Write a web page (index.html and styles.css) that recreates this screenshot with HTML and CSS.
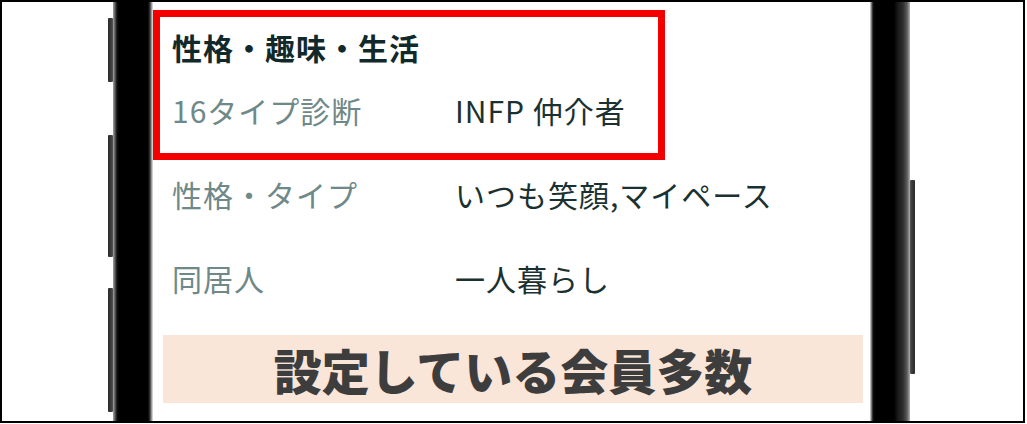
FILE: index.html
```html
<!DOCTYPE html>
<html lang="ja">
<head>
<meta charset="utf-8">
<link rel="stylesheet" href="styles.css">
</head>
<body>
<div class="frame">
  <div class="phone">
    <div class="buttons-left">
      <span class="btn b1"></span>
      <span class="btn b2"></span>
      <span class="btn b3"></span>
    </div>
    <div class="bezel-left"></div>
    <div class="screen">
      <h2 class="heading">性格・趣味・生活</h2>
      <div class="rows">
        <div class="label">16タイプ診断</div>
        <div class="value">INFP 仲介者</div>
        <div class="label">性格・タイプ</div>
        <div class="value">いつも笑顔,マイペース</div>
        <div class="label">同居人</div>
        <div class="value">一人暮らし</div>
      </div>
      <div class="banner">設定している会員多数</div>
      <div class="highlight"></div>
    </div>
    <div class="bezel-right"></div>
    <div class="buttons-right">
      <span class="btn b4"></span>
    </div>
  </div>
</div>
</body>
</html>
```

FILE: styles.css
```css
html, body {
  margin: 0;
  padding: 0;
  background: #ffffff;
}

body {
  font-family: "Noto Sans CJK JP", "Noto Sans", sans-serif;
}

.frame {
  box-sizing: border-box;
  width: 1025px;
  height: 423px;
  border: 2px solid #000;
  background: #fff;
  overflow: hidden;
  display: flex;
}

.phone {
  margin-left: 106px;
  display: flex;
  height: 100%;
}

.buttons-left {
  width: 5px;
  display: flex;
  flex-direction: column;
}

.btn {
  display: block;
  width: 5px;
  background: linear-gradient(to right, #2a2a2a, #3c3c3c 60%, #555);
  border-radius: 1px;
}

.b1 { margin-top: 16px; height: 64px; }
.b2 { margin-top: 53px; height: 122px; }
.b3 { margin-top: 31px; height: 124px; }

.buttons-right {
  width: 5px;
  display: flex;
  flex-direction: column;
}

.b4 {
  margin-top: 178px;
  height: 194px;
  background: linear-gradient(to right, #555, #3c3c3c 40%, #2a2a2a);
}

.bezel-left {
  width: 40px;
  background: linear-gradient(to right, #a5a5a5 0, #5a5a5a 2px, #111 4px, #000 6px, #000 35px, #3a3a3a 37px, #b8b8b8 39px, #e6e6e6 40px);
}

.bezel-right {
  width: 40px;
  background: linear-gradient(to right, #e0e0e0 0, #9a9a9a 1px, #111 3px, #000 5px, #000 24px, #1a1a1a 28px, #2e2e2e 33px, #5a5a5a 37px, #b0b0b0 40px);
}

.screen {
  position: relative;
  width: 717px;
  box-sizing: border-box;
  padding: 25px 7px 0 10px;
  background: #fff;
}

.heading {
  margin: 0 0 1px 9px;
  font-size: 30px;
  line-height: 40px;
  font-weight: 700;
  letter-spacing: 1px;
  color: #12292b;
}

.rows {
  margin-left: 9px;
  display: grid;
  grid-template-columns: 283px auto;
  grid-auto-rows: 84px;
  align-items: center;
  font-size: 30px;
  line-height: 40px;
  letter-spacing: 1px;
}

.label {
  color: #6f8888;
}

.value {
  color: #1b3131;
}

.banner {
  margin-top: 15px;
  width: 700px;
  height: 68px;
  background: #fae5d9;
  display: flex;
  align-items: center;
  justify-content: center;
  font-size: 48px;
  font-weight: 900;
  line-height: 1;
  color: #3d3d3d;
}

.highlight {
  position: absolute;
  left: 0;
  top: 8px;
  width: 512px;
  height: 150px;
  box-sizing: border-box;
  border: 7px solid #f40000;
}
```
